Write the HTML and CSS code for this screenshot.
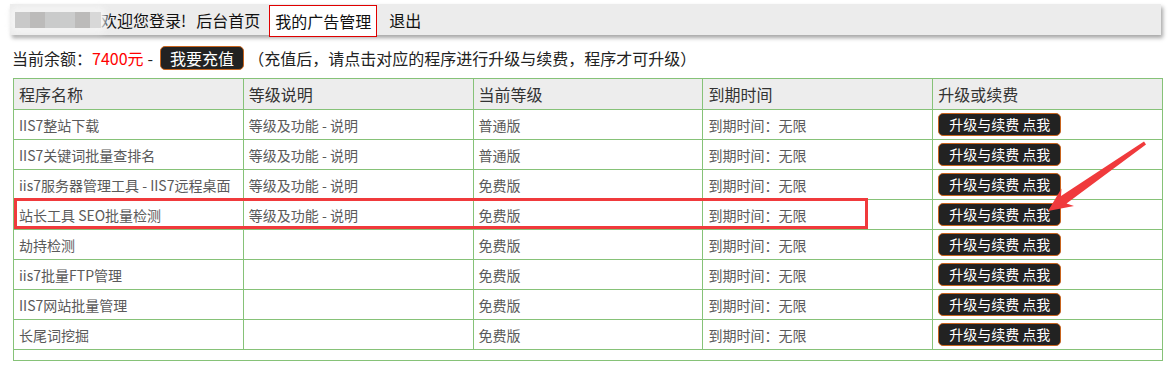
FILE: index.html
```html
<!DOCTYPE html>
<html lang="zh-CN">
<head>
<meta charset="utf-8">
<title>我的广告管理</title>
<link rel="stylesheet" href="styles.css">
</head>
<body>
<div class="page">
  <div class="topbar">
    <span class="user-blur"><i class="b1"></i><i class="b2"></i><i class="b3"></i><i class="b4"></i><i class="b5"></i><i class="b6"></i></span>
    <span class="welcome">欢迎您登录!</span>
    <a class="nav nav-home">后台首页</a>
    <a class="nav nav-active">我的广告管理</a>
    <a class="nav nav-exit">退出</a>
  </div>

  <div class="balance">
    <span>当前余额：</span><span class="money">7400元</span><span class="dash">-</span><span class="btn-charge">我要充值</span><span class="note">（充值后，请点击对应的程序进行升级与续费，程序才可升级）</span>
  </div>

  <table class="grid">
    <thead>
      <tr><th>程序名称</th><th>等级说明</th><th>当前等级</th><th>到期时间</th><th>升级或续费</th></tr>
    </thead>
    <tbody>
      <tr><td>IIS7整站下载</td><td>等级及功能 - 说明</td><td>普通版</td><td>到期时间：无限</td><td><span class="btn-up">升级与续费 点我</span></td></tr>
      <tr><td>IIS7关键词批量查排名</td><td>等级及功能 - 说明</td><td>普通版</td><td>到期时间：无限</td><td><span class="btn-up">升级与续费 点我</span></td></tr>
      <tr><td>iis7服务器管理工具 - IIS7远程桌面</td><td>等级及功能 - 说明</td><td>免费版</td><td>到期时间：无限</td><td><span class="btn-up">升级与续费 点我</span></td></tr>
      <tr><td>站长工具 SEO批量检测</td><td>等级及功能 - 说明</td><td>免费版</td><td>到期时间：无限</td><td><span class="btn-up">升级与续费 点我</span></td></tr>
      <tr><td>劫持检测</td><td></td><td>免费版</td><td>到期时间：无限</td><td><span class="btn-up">升级与续费 点我</span></td></tr>
      <tr><td>iis7批量FTP管理</td><td></td><td>免费版</td><td>到期时间：无限</td><td><span class="btn-up">升级与续费 点我</span></td></tr>
      <tr><td>IIS7网站批量管理</td><td></td><td>免费版</td><td>到期时间：无限</td><td><span class="btn-up">升级与续费 点我</span></td></tr>
      <tr><td>长尾词挖掘</td><td></td><td>免费版</td><td>到期时间：无限</td><td><span class="btn-up">升级与续费 点我</span></td></tr>
      <tr class="empty-row"><td colspan="5"></td></tr>
    </tbody>
  </table>

  <svg class="annotation" width="1175" height="387" viewBox="0 0 1175 387" xmlns="http://www.w3.org/2000/svg">
    <rect x="15.5" y="199.5" width="851" height="28" fill="none" stroke="#f03a3c" stroke-width="3"/>
    <polygon fill="#f03a3c" points="1048,211 1074,206 1066.5,203.5 1146,144.5 1144,141.5 1061,196 1061.5,188.5"/>
  </svg>
</div>
</body>
</html>
```

FILE: styles.css
```css
* { box-sizing: border-box; }

html, body {
  margin: 0;
  padding: 0;
  background: #fff;
}

body {
  font-family: "Noto Sans CJK SC", "Microsoft YaHei", sans-serif;
  font-size: 16px;
  color: #222;
}

.page {
  position: relative;
  width: 1175px;
  height: 387px;
  overflow: hidden;
}

/* top bar */
.topbar {
  display: flex;
  align-items: center;
  margin: 4px 0 0 10px;
  width: 1151px;
  height: 31px;
  background: #ececec;
  box-shadow: 2px 3px 4px rgba(0, 0, 0, 0.35);
  line-height: 20px;
}

.user-blur {
  display: flex;
  margin-left: 5px;
  height: 16px;
  width: 86px;
  border-radius: 3px;
  box-shadow: 0 0 6px 5px rgba(245, 245, 245, 0.9);
  filter: blur(0.6px);
}
.user-blur i { display: block; height: 100%; width: 15px; }
.user-blur .b1 { background: #c9c9c9; }
.user-blur .b2 { background: #bcbbba; }
.user-blur .b3 { background: #cacbcb; }
.user-blur .b4 { background: #cbcccc; }
.user-blur .b5 { background: #bcbbba; }
.user-blur .b6 { background: #d8d8d8; width: 11px; }

.welcome {
  margin-right: 10px;
  color: #111;
}

.nav {
  color: #111;
  text-decoration: none;
  white-space: nowrap;
}

.nav-home { margin-right: 9px; }

.nav-active {
  border: 1px solid #e00000;
  background: #fff;
  padding: 5px 5px;
  margin-top: 2px;
  height: 32px;
  margin-right: 12px;
}

/* balance line */
.balance {
  display: flex;
  align-items: center;
  margin: 11px 0 0 12px;
  height: 24px;
  line-height: 22px;
  white-space: nowrap;
}

.money { color: #ff0000; }
.dash { margin: 0 7px 0 4px; }

.btn-charge {
  display: inline-block;
  height: 24px;
  padding: 0 9px;
  background: #222;
  color: #fff;
  border: 1px solid #c8641e;
  border-radius: 5px;
  line-height: 22px;
}

.note { margin-left: 4px; }

/* table */
.grid {
  margin: 8px 0 0 13px;
  width: 1150px;
  border-collapse: collapse;
  table-layout: fixed;
  border: 1px solid #86c278;
}

.grid th,
.grid td {
  border: 1px solid #86c278;
  padding: 0 5px;
  text-align: left;
  vertical-align: middle;
  white-space: nowrap;
  overflow: hidden;
}

.grid th {
  height: 31px;
  background: #ededed;
  font-weight: normal;
  font-size: 16px;
  color: #333;
  line-height: 20px;
}

.grid td {
  height: 30px;
  font-size: 14px;
  color: #5a5a5a;
  line-height: 18px;
}

.grid .empty-row td { height: 11px; }

.btn-up {
  display: inline-block;
  height: 23px;
  padding: 0 10px;
  background: #222;
  color: #fff;
  border: 1px solid #c8641e;
  border-radius: 5px;
  font-size: 14px;
  line-height: 21px;
  font-weight: normal;
  vertical-align: middle;
}

/* annotation overlay drawn over the screenshot */
.annotation {
  position: absolute;
  left: 0;
  top: 0;
  pointer-events: none;
}
```
